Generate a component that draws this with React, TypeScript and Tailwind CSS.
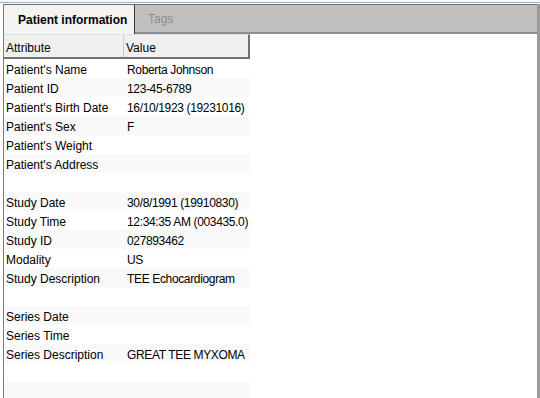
import React from "react";

const rows: [string, string][] = [
  ["Patient's Name", "Roberta Johnson"],
  ["Patient ID", "123-45-6789"],
  ["Patient's Birth Date", "16/10/1923 (19231016)"],
  ["Patient's Sex", "F"],
  ["Patient's Weight", ""],
  ["Patient's Address", ""],
  ["", ""],
  ["Study Date", "30/8/1991 (19910830)"],
  ["Study Time", "12:34:35 AM (003435.0)"],
  ["Study ID", "027893462"],
  ["Modality", "US"],
  ["Study Description", "TEE Echocardiogram"],
  ["", ""],
  ["Series Date", ""],
  ["Series Time", ""],
  ["Series Description", "GREAT TEE MYXOMA"],
  ["", ""],
  ["", ""],
];

export default function App() {
  return (
    <div className="w-[540px] h-[398px] bg-white flex flex-col overflow-hidden font-['Liberation_Sans',Arial,sans-serif] text-[12px] leading-[18px] text-black">
      <div className="h-[2px] shrink-0 bg-[#f5f7fa]" />
      <div className="h-px shrink-0 bg-[#9bb2cf]" />
      <div className="h-px shrink-0 bg-white" />
      <div className="flex flex-1 min-h-0 overflow-hidden">
        <div className="w-[3px] shrink-0 bg-white" />
        <div className="flex-1 flex flex-col min-w-0 border-l border-[#7c7c7c] overflow-hidden">
          <div className="flex h-[30px] shrink-0 border-t border-[#6f6f6f]">
            <div className="w-[131px] shrink-0 bg-[#f3f3f3] border-r border-[#3a3a3a] flex items-center pt-[1px] pl-[14px] font-bold">
              Patient information
            </div>
            <div className="flex-1 bg-[#c0c0c0] border-b-2 border-[#8a8d91] flex items-center pl-[13px] text-[#8c8c8c]">
              Tags
            </div>
          </div>
          <div className="flex-1 min-h-0 bg-white overflow-hidden">
            <div className="w-[246px]">
              <div className="flex h-[25px] shrink-0 bg-[#f0f0f0] border-r-2 border-b-2 border-[#727272] border-t border-t-[#e0e0e0]">
                <div className="w-[120px] shrink-0 border-r border-[#c8c8c8] flex items-center pt-[3px] pl-[2px]">Attribute</div>
                <div className="flex-1 flex items-center pt-[3px] pl-[2px]">Value</div>
              </div>
              {rows.map(([a, v], i) => (
                <div
                  key={i}
                  className={`flex h-[19px] shrink-0 items-center pt-[3px] ${i % 2 === 1 ? "bg-[#f9f9f9]" : "bg-white"}`}
                >
                  <div className="w-[121px] shrink-0 pl-[2px] whitespace-nowrap">{a}</div>
                  <div className="flex-1 pl-[2px] whitespace-nowrap tracking-[-0.35px]">{v}</div>
                </div>
              ))}
            </div>
          </div>
        </div>
        <div className="w-[3px] shrink-0 bg-[#9a9a9a]" />
      </div>
    </div>
  );
}
